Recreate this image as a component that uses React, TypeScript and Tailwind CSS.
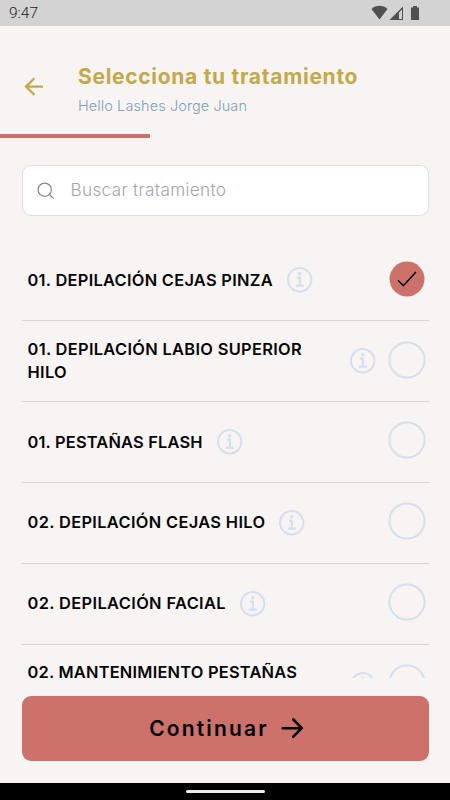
import { useState } from "react"

interface Treatment {
  id: number
  name: string
  style: string
}

const treatments: Treatment[] = [
  { id: 1, name: "01. DEPILACIÓN CEJAS PINZA", style: "tracking-[0.29px]" },
  { id: 2, name: "01. DEPILACIÓN LABIO SUPERIOR HILO", style: "tracking-[0.33px] w-[308px]" },
  { id: 3, name: "01. PESTAÑAS FLASH", style: "tracking-[0.19px]" },
  { id: 4, name: "02. DEPILACIÓN CEJAS HILO", style: "tracking-[0.35px]" },
  { id: 5, name: "02. DEPILACIÓN FACIAL", style: "tracking-[0.38px]" },
  { id: 6, name: "02. MANTENIMIENTO PESTAÑAS", style: "tracking-[0.23px] w-[308px] h-[47.4px]" },
]

const StatusBar = () => (
  <div className="flex h-[26px] shrink-0 items-center justify-between bg-[#d3d3d3] pl-[9px] pr-[30px]">
    <span className="pt-px font-['Roboto',sans-serif] text-[15.5px] font-light leading-[27px] text-[#1c1c1c]">
      9:47
    </span>
    <svg width="49" height="16" viewBox="0 0 49 16" fill="#505050">
      <path d="M0.5 4C5-0.3 12-0.3 16.5 4L8.5 14.5z" />
      <path fillRule="evenodd" d="M18.5 15L32 1.5V15zM28 7.5V14h3V4.5z" />
      <path d="M42 1h4v1.5h2V15h-8V2.5h2z" />
    </svg>
  </div>
)

const InfoIcon = () => (
  <svg
    className="shrink-0"
    width="26"
    height="26"
    viewBox="0 0 26 26"
    fill="none"
    stroke="#d5dfed"
    strokeWidth="2"
  >
    <circle cx="12.7" cy="12.7" r="11.7" />
    <circle cx="12.7" cy="6.7" r="1.8" fill="#d5dfed" stroke="none" />
    <path d="M10 10.6h2.9v8M8.8 18.6h8" strokeWidth="2.1" />
  </svg>
)

const CheckCircle = ({ checked }: { checked: boolean }) =>
  checked ? (
    <svg width="38" height="38" viewBox="0 0 38 38" fill="none">
      <circle cx="19" cy="19" r="17.5" fill="#cd716b" />
      <path d="M10 20.2l5.4 5.5L27.9 12" stroke="#000" strokeWidth="1.5" />
    </svg>
  ) : (
    <svg width="38" height="38" viewBox="0 0 38 38" fill="none">
      <circle cx="19" cy="19" r="17.6" stroke="#d5dfed" strokeWidth="2" />
    </svg>
  )

const App = () => {
  const [selected, setSelected] = useState(1)

  return (
    <div className="flex h-[800px] w-[450px] flex-col overflow-hidden bg-[#f8f4f3] font-['Inter',sans-serif]">
      <StatusBar />

      <header className="flex h-[107.5px] shrink-0 items-start">
        <button className="ml-6 mt-[51px]">
          <svg width="20" height="20" viewBox="0 0 20 20" fill="none" stroke="#c3a84c" strokeWidth="2.2">
            <path d="M19 9.6H2M10.4 1.3L2 9.6l8.4 8.3" />
          </svg>
        </button>
        <div className="ml-[34px] mt-[36.5px]">
          <h1 className="whitespace-nowrap text-[21px] font-bold leading-[28px] tracking-[0.7px] text-[#c3a84c]">
            Selecciona tu tratamiento
          </h1>
          <p className="mt-[4px] whitespace-nowrap text-[14.5px] font-light leading-[22px] tracking-[0.09px] text-[#819dc2]">
            Hello Lashes Jorge Juan
          </p>
        </div>
      </header>
      <div className="h-1 w-[150px] shrink-0 bg-[#cd716b]" />

      <label className="mx-[22px] mt-[27.5px] flex h-[51px] w-[407px] shrink-0 items-center rounded-[9px] border border-[#dfdfe3] bg-white pl-[14px]">
        <svg width="18" height="18" viewBox="0 0 18 18" fill="none" stroke="#85858e" strokeWidth="1.2">
          <circle cx="7.7" cy="7.7" r="6.6" />
          <path d="M12.5 12.5l4.1 4.1" />
        </svg>
        <input
          className="mb-px ml-[15.5px] w-[300px] bg-transparent text-[17.2px] font-light tracking-[0.32px] outline-none placeholder:text-[#a5a5b0]"
          placeholder="Buscar tratamiento"
        />
      </label>

      <ul className="mx-[22px] mt-[24.2px] h-[437.8px] w-[407px] shrink-0 overflow-hidden">
        {treatments.map(item => (
          <li
            key={item.id}
            className="flex h-[80.9px] items-center border-b border-[#d9d6d6] pl-[5.5px] pr-[3px]"
            onClick={() => setSelected(item.id)}
          >
            <div className="flex flex-1 items-center gap-[14px]">
              <div className={`text-[16.4px] font-semibold leading-[22.7px] text-[#050508] ${item.style}`}>
                {item.name}
              </div>
              <InfoIcon />
            </div>
            <div className="mb-[3px]">
              <CheckCircle checked={selected === item.id} />
            </div>
          </li>
        ))}
      </ul>

      <button className="mx-[22px] mt-[18px] flex h-[65px] w-[407px] shrink-0 items-center justify-center rounded-[9px] bg-[#cd716b] text-black">
        <span className="ml-px text-[21px] font-semibold tracking-[2.15px]">Continuar</span>
        <svg className="ml-[12px]" width="22" height="20" viewBox="0 0 22 20" fill="none" stroke="currentColor" strokeWidth="2.6" strokeLinecap="round" strokeLinejoin="round">
          <path d="M1.8 10.2h19M12.3 1.5l8.4 8.7-8.4 8.5" />
        </svg>
      </button>

      <div className="mt-auto flex h-[17.5px] shrink-0 items-center justify-center bg-black">
        <div className="mt-px h-[3px] w-[79px] rounded-full bg-[#ececec]" />
      </div>
    </div>
  )
}

export default App
